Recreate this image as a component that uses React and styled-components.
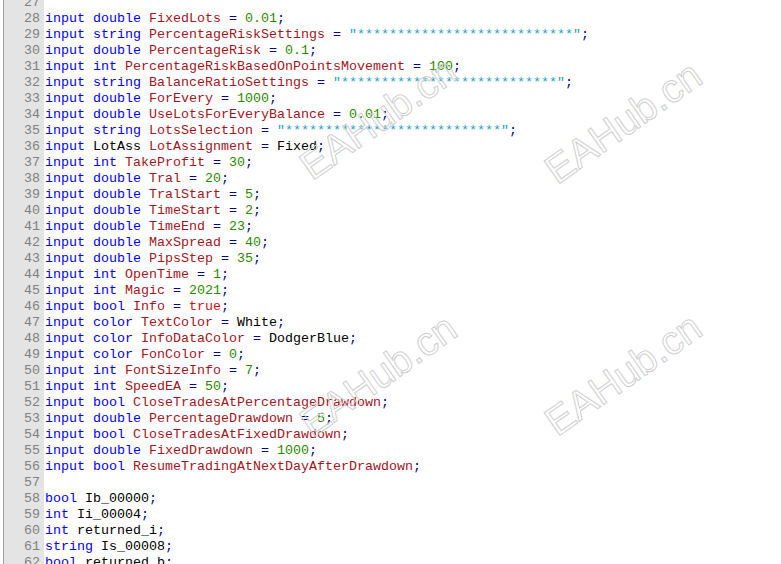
import React from "react";
import styled, { createGlobalStyle } from "styled-components";

const KEYWORDS = ["input", "double", "string", "int", "bool", "color"];

const LINES = [
  "",
  "input double FixedLots = 0.01;",
  'input string PercentageRiskSettings = "***************************";',
  "input double PercentageRisk = 0.1;",
  "input int PercentageRiskBasedOnPointsMovement = 100;",
  'input string BalanceRatioSettings = "***************************";',
  "input double ForEvery = 1000;",
  "input double UseLotsForEveryBalance = 0.01;",
  'input string LotsSelection = "***************************";',
  "input LotAss LotAssignment = Fixed;",
  "input int TakeProfit = 30;",
  "input double Tral = 20;",
  "input double TralStart = 5;",
  "input double TimeStart = 2;",
  "input double TimeEnd = 23;",
  "input double MaxSpread = 40;",
  "input double PipsStep = 35;",
  "input int OpenTime = 1;",
  "input int Magic = 2021;",
  "input bool Info = true;",
  "input color TextColor = White;",
  "input color InfoDataColor = DodgerBlue;",
  "input color FonColor = 0;",
  "input int FontSizeInfo = 7;",
  "input int SpeedEA = 50;",
  "input bool CloseTradesAtPercentageDrawdown;",
  "input double PercentageDrawdown = 5;",
  "input bool CloseTradesAtFixedDrawdown;",
  "input double FixedDrawdown = 1000;",
  "input bool ResumeTradingAtNextDayAfterDrawdown;",
  "",
  "bool Ib_00000;",
  "int Ii_00004;",
  "int returned_i;",
  "string Is_00008;",
  "bool returned_b;",
];

const FIRST_LINE = 27;

const MARKS = [
  { x: 378, y: 118 },
  { x: 623, y: 122 },
  { x: 378, y: 375 },
  { x: 623, y: 374 },
];

// split a line into coloured tokens
function tokenize(line) {
  const out = [];
  const re = /("[^"]*")|(\d+(?:\.\d+)?)|([A-Za-z_][A-Za-z0-9_]*)|(\s+)|(.)/g;
  let m;
  let afterInput = false;
  let wordIndex = 0;
  while ((m = re.exec(line))) {
    const [t, str, num, word, ws] = m;
    if (str) out.push({ t, kind: "str" });
    else if (num) out.push({ t, kind: "num" });
    else if (word) {
      if (KEYWORDS.includes(word)) {
        out.push({ t, kind: "kw" });
        if (word === "input") afterInput = true;
      } else if (word === "true") out.push({ t, kind: "bool" });
      else if (afterInput && wordIndex === 2) out.push({ t, kind: "ident" });
      else out.push({ t, kind: "plain" });
      wordIndex++;
    } else if (ws) out.push({ t, kind: "plain" });
    else out.push({ t, kind: "op" });
  }
  return out;
}

const GlobalStyle = createGlobalStyle`
  html, body {
    margin: 0;
    padding: 0;
    background: #ffffff;
  }
`;

const Editor = styled.div`
  width: 781px;
  height: 564px;
  overflow: hidden;
  position: relative;
  display: flex;
  background: #ffffff;
  font-family: "Liberation Mono", "Courier New", monospace;
  font-size: 13.33px;
`;

const Gutter = styled.div`
  margin-left: 3px;
  width: 36px;
  padding-right: 4px;
  border-left: 1px solid #a0a0a0;
  background: #e4e4e4;
  color: #808080;
  text-align: right;
  padding-top: 2px;
  margin-top: -8px;
`;

const Code = styled.div`
  flex: 1;
  padding-left: 1px;
  padding-top: 2px;
  margin-top: -8px;
`;

const Line = styled.div`
  height: 16px;
  line-height: 17px;
  white-space: pre;
`;

const COLORS = {
  kw: "#0000ff",
  ident: "#a3151c",
  num: "#2b8a00",
  str: "#1a9fc0",
  op: "#000080",
  bool: "#d01010",
  plain: "#000000",
};

const Tok = styled.span`
  color: ${(p) => COLORS[p.$kind]};
`;

const Watermarks = styled.svg`
  position: absolute;
  left: 0;
  top: 0;
  pointer-events: none;
`;

const Mark = styled.text`
  font-family: "Liberation Sans", Arial, sans-serif;
  font-size: 40px;
  fill: none;
  stroke: #cfcfcf;
  stroke-width: 1;
`;

export default function App() {
  return (
    <>
      <GlobalStyle />
      <Editor>
        <Gutter>
          {LINES.map((_, i) => (
            <Line key={i}>{FIRST_LINE + i}</Line>
          ))}
        </Gutter>
        <Code>
          {LINES.map((line, i) => (
            <Line key={i}>
              {tokenize(line).map((tk, j) => (
                <Tok key={j} $kind={tk.kind}>
                  {tk.t}
                </Tok>
              ))}
            </Line>
          ))}
        </Code>
        <Watermarks width="781" height="564">
          {MARKS.map((m, i) => (
            <Mark
              key={i}
              x={m.x}
              y={m.y}
              textAnchor="middle"
              dominantBaseline="central"
              transform={`rotate(-35 ${m.x} ${m.y})`}
            >
              EAHub.cn
            </Mark>
          ))}
        </Watermarks>
      </Editor>
    </>
  );
}
